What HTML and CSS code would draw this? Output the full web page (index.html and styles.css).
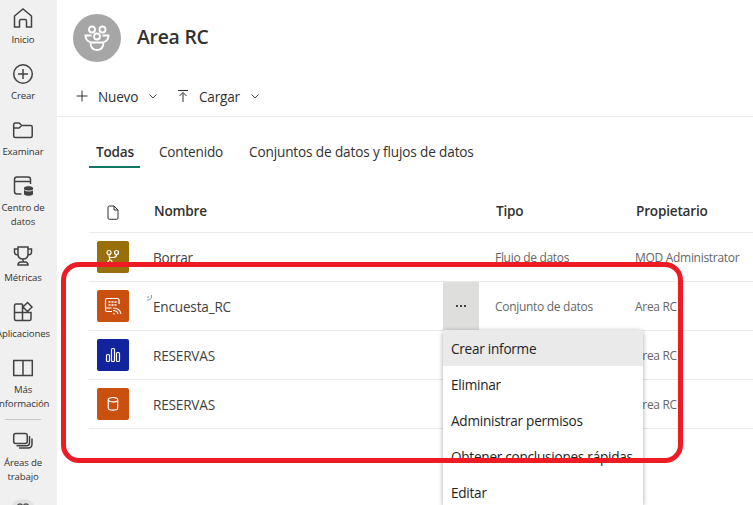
FILE: index.html
```html
<!DOCTYPE html>
<html lang="es">
<head>
<meta charset="utf-8">
<title>Area RC</title>
<link rel="stylesheet" href="styles.css">
</head>
<body>
<div class="app">
  <nav class="sidebar">
    <a class="nav-item"><svg class="nav-icon" viewBox="0 0 22 22"><path d="M2.500 20V9L11 2l8.500 7v11h-5v-6q0-1.500-1.500-1.500H9q-1.500 0-1.500 1.500v6z"/></svg><span>Inicio</span></a>
    <a class="nav-item"><svg class="nav-icon" viewBox="0 0 22 22"><circle cx="11" cy="11" r="9.300"/><path d="M11 6v10M6 11h10"/></svg><span>Crear</span></a>
    <a class="nav-item"><svg class="nav-icon" viewBox="0 0 22 22"><path d="M1.700 5.500q0-1.500 1.500-1.500h4l2.500 2.500h9q1.500 0 1.500 1.500V17q0 1.500-1.500 1.500H3.200q-1.500 0-1.500-1.500zM1.700 9H7L9.700 6.500"/></svg><span>Examinar</span></a>
    <a class="nav-item two-lines"><svg class="nav-icon" viewBox="0 0 22 22"><path d="M9.500 19H5q-2.500 0-2.500-2.500V4.500Q2.500 2 5 2h11q2.500 0 2.500 2.500v4.500M2.500 6.500h16"/><path class="solid" d="M11.500 13c0-3 10-3 10 0v6c0 3-10 3-10 0z"/><path class="cut" d="M12 14.500c1 2 8.500 2 9.500 0"/></svg><span>Centro de<br>datos</span></a>
    <a class="nav-item"><svg class="nav-icon" viewBox="0 0 22 22"><path d="M6 2h10v7q0 5-5 5T6 9zM6 4H2.500v3q0 3 3.700 3M16 4h3.500v3q0 3-3.700 3M11 14v3M6 20q0-3 3-3h4q3 0 3 3z"/></svg><span>Métricas</span></a>
    <a class="nav-item"><svg class="nav-icon" viewBox="0 0 22 22"><path d="M10.500 3H4Q2.500 3 2.500 4.500V18q0 1.500 1.500 1.500h13.500q1.500 0 1.500-1.500v-6.500H2.500M10.500 3v16.500M15.500 1.500l4.500 4.500-4.500 4.500L11 6z"/></svg><span>Aplicaciones</span></a>
    <a class="nav-item two-lines"><svg class="nav-icon" viewBox="0 0 22 22"><path d="M1.700 3.500h18.600v15H1.700zM11 3.500v15"/></svg><span>Más<br>información</span></a>
    <hr class="nav-divider">
    <a class="nav-item two-lines areas"><svg class="nav-icon" viewBox="0 0 22 22"><rect x="1.700" y="3.500" width="13.500" height="10" rx="2"/><path d="M4.500 15.700h10q3 0 3-3V6M7 18h9q4 0 4-4V8.500"/></svg><span>Áreas de<br>trabajo</span></a>
    <div class="workspace-badge"><svg viewBox="0 0 22 7"><circle cx="8" cy="7.500" r="2.500"/><circle cx="14" cy="7.500" r="2.500"/></svg></div>
  </nav>

  <main class="content">
    <header class="workspace">
      <div class="avatar"><svg viewBox="0 0 48 48"><circle cx="19" cy="15.500" r="3"/><circle cx="29.500" cy="15.500" r="3"/><path d="M18.500 21.500h-6q0 5 4.500 6.500M29.500 21.500h6q0 5-4.500 6.500M17.500 28.500h13q0 7.500-6.500 7.500t-6.500-7.500z"/><circle class="front" cx="24" cy="22.500" r="3"/></svg></div>
      <h1>Area RC</h1>
    </header>
    <div class="toolbar">
      <button class="tool"><svg class="tool-icon" viewBox="0 0 12 12"><path d="M6 .5v11M.5 6h11"/></svg><span class="nuevo">Nuevo</span><svg class="chevron" viewBox="0 0 8 5"><path d="M.5.500L4 4 7.500.500"/></svg></button>
      <button class="tool"><svg class="tool-icon" viewBox="0 0 12 12"><path d="M1 .5h10M6 12V3M2.500 6L6 2.500 9.500 6"/></svg><span class="cargar">Cargar</span><svg class="chevron" viewBox="0 0 8 5"><path d="M.5.500L4 4 7.500.500"/></svg></button>
    </div>
    <div class="tabs">
      <a class="tab active">Todas</a>
      <a class="tab">Contenido</a>
      <a class="tab long">Conjuntos de datos y flujos de datos</a>
    </div>
    <section class="table">
      <div class="row head">
        <svg class="file-icon" viewBox="0 0 12 15"><path d="M2.500 1H7l4 4v8q0 1.300-1.300 1.300H2.300Q1 14.300 1 13V2.300Q1 1 2.500 1zM7 1v4h4"/></svg>
        <span>Nombre</span><span></span><span>Tipo</span><span>Propietario</span>
      </div>
      <div class="row">
        <div class="tile dataflow"><svg viewBox="0 0 32 32"><circle cx="12" cy="11.500" r="2"/><circle cx="19.500" cy="11.500" r="2"/><circle cx="13" cy="21" r="2"/><path d="M12 13.500q0 3 1 5.500M19.500 13.500q0 3-3 3h-4"/></svg></div>
        <span class="name">Borrar</span><span></span><span class="meta">Flujo de datos</span><span class="meta">MOD Administrator</span>
      </div>
      <div class="row">
        <div class="tile dataset"><svg viewBox="0 0 32 32"><path d="M15 21.500h-5q-1.500 0-1.500-1.500V10q0-1.500 1.500-1.500h10.500q1.500 0 1.500 1.500v4M8.500 18h6"/><path class="dots" d="M11.500 12h8M11.500 15h8"/><path d="M16 23.500q1.500 0 1.500 1M16 20.500q4.500 0 5 3.500M16 18q7 0 8 6"/></svg></div>
        <span class="name marked">Encuesta_RC<svg class="mark" viewBox="0 0 6 6"><path d="M0 2h2M4.500 0v3L2 5H0"/></svg></span><button class="more"><i></i><i></i><i></i></button><span class="meta">Conjunto de datos</span><span class="meta">Area RC</span>
      </div>
      <div class="row">
        <div class="tile report"><svg viewBox="0 0 32 32"><rect x="9.500" y="15.500" width="3" height="7" rx="1"/><rect x="14.500" y="9.500" width="3" height="13" rx="1"/><rect x="19.500" y="13.500" width="3" height="9" rx="1"/></svg></div>
        <span class="name">RESERVAS</span><span></span><span></span><span class="meta">Area RC</span>
      </div>
      <div class="row">
        <div class="tile dataset"><svg viewBox="0 0 32 32"><ellipse cx="16" cy="11.700" rx="4.700" ry="2.200"/><path d="M11.300 11.700V20q0 2.200 4.700 2.200t4.700-2.200v-8.300"/></svg></div>
        <span class="name">RESERVAS</span><span></span><span></span><span class="meta">Area RC</span>
      </div>
    </section>
  </main>
</div>
<div class="menu">
  <a class="menu-item selected">Crear informe</a>
  <a class="menu-item">Eliminar</a>
  <a class="menu-item">Administrar permisos</a>
  <a class="menu-item">Obtener conclusiones rápidas</a>
  <a class="menu-item last">Editar</a>
</div>
<div class="highlight"></div>
</body>
</html>
```
FILE: styles.css
```css
* { box-sizing: border-box; }
body {
  margin: 0;
  height: 505px;
  overflow: hidden;
  position: relative;
  background: #fff;
  color: #323130;
  font: 13.6px/20px "Open Sans", "Noto Sans", sans-serif;
  letter-spacing: -0.2px;
}
svg { fill: none; stroke: currentColor; }
button { border: 0; padding: 0; background: none; font: inherit; letter-spacing: inherit; color: inherit; }
.app { display: flex; height: 505px; }

.sidebar {
  flex: 0 0 57px;
  padding-right: 11px;
  overflow: hidden;
  background: #f0f0f0;
  display: flex;
  flex-direction: column;
  align-items: center;
}
.nav-item {
  flex: 0 0 56px;
  width: 80px;
  padding-top: 7px;
  display: flex;
  flex-direction: column;
  align-items: center;
  text-align: center;
  font-size: 9.6px;
  line-height: 14px;
  letter-spacing: -0.12px;
  color: #333;
}
.nav-item.two-lines { flex-basis: 70px; }
.nav-icon { width: 22px; height: 22px; margin-bottom: 4px; stroke: #424242; stroke-width: 1.5; }
.nav-icon .solid { fill: #424242; stroke: #f0f0f0; stroke-width: 1; }
.nav-icon .cut { stroke: #f0f0f0; stroke-width: 1; }
.nav-divider { flex: none; width: 36px; margin: -1px 0 0; border: 0; border-top: 1px solid #c8c8c8; }
.nav-item.areas { padding-top: 10px; }
.workspace-badge { flex: none; width: 22px; height: 7px; margin-top: 9px; border-radius: 11px 11px 0 0 / 7px 7px 0 0; background: #e2e2e2; color: #555; }
.workspace-badge svg { display: block; width: 22px; height: 7px; stroke-width: 1.4; }

.content { flex: 1; min-width: 0; }
.workspace { display: flex; align-items: center; gap: 16px; height: 76px; padding-left: 16px; }
.avatar { width: 48px; height: 48px; border-radius: 50%; background: #a6a6a6; color: #fff; }
.avatar svg { display: block; stroke-width: 1.8; }
.avatar .front { fill: #a6a6a6; }
h1 { margin: 0 0 2px; font-size: 19.4px; font-weight: 600; line-height: 28px; letter-spacing: -0.25px; }
.toolbar { display: flex; align-items: center; gap: 20px; height: 41px; padding-left: 19px; border-bottom: 1px solid #eaeaea; }
.tool { display: flex; align-items: center; }
.tool-icon { width: 12px; height: 12px; margin-right: 10px; }
.chevron { width: 8px; height: 5px; margin-left: 10px; stroke-width: .9; }
.nuevo { width: 41px; padding-top: 1px; text-align: left; }
.cargar { width: 42px; padding-top: 1px; text-align: left; }
.tabs { display: flex; gap: 12px; margin: 22px 0 0 32px; height: 29px; }
.tab { padding: 3px 7px 0; white-space: nowrap; }
.tab:nth-child(2) { width: 78px; }
.tab.long { letter-spacing: -0.14px; }
.tab.active { font-weight: 600; border-bottom: 2px solid #117865; width: 51px; }

.table { margin: 22px 0 0 32px; }
.row {
  display: grid;
  grid-template-columns: 56px 290px 52px 140px 1fr;
  align-items: center;
  height: 49px;
  padding-left: 8px;
  border-bottom: 1px solid #eaeaea;
}
.row.head { height: 43px; font-weight: 600; }
.row.head span { padding-left: 1px; }
.file-icon { width: 12px; height: 15px; margin: 2px 0 0 10px; }
.tile { width: 32px; height: 32px; border-radius: 2px; color: #fff; }
.tile svg { display: block; stroke-width: 1.2; }
.tile .dots { stroke-dasharray: 2 1; stroke-width: 1.3; }
.dataflow { background: #986f0b; }
.dataset { background: #ca5010; }
.report { background: #12239e; }
.name { padding-top: 2px; color: #424242; }
.marked { position: relative; }
.mark { position: absolute; left: -6px; top: 0; width: 6px; height: 6px; color: #7fa99e; }
.meta { padding-top: 1px; font-size: 12px; color: #666; white-space: nowrap; letter-spacing: -0.3px; }
.more { width: 36px; height: 48px; background: #dededd; display: flex; align-items: center; justify-content: center; gap: 2px; }
.more i { width: 2px; height: 2px; background: #444; }

.menu {
  position: absolute;
  left: 443px;
  top: 330px;
  width: 200px;
  height: 175px;
  border-radius: 4px 4px 0 0;
  background: #fff;
  box-shadow: 0 1px 5px rgba(0, 0, 0, .35);
  overflow: hidden;
}
.menu-item { display: block; height: 36px; padding: 9px 8px 0; white-space: nowrap; color: #242424; letter-spacing: -0.26px; }
.menu-item.selected { background: #eaeaea; }
.menu-item.last { height: 31px; }
.highlight { position: absolute; left: 61px; top: 262px; width: 622px; height: 201px; border: 5px solid #ed1c24; border-radius: 18px; }
```
